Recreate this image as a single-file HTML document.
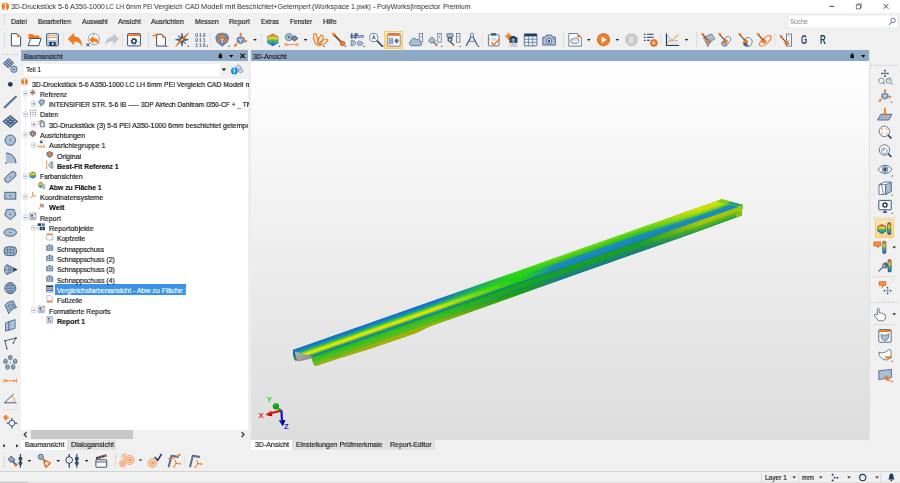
<!DOCTYPE html>
<html lang="de"><head><meta charset="utf-8"><title>PolyWorks|Inspector Premium</title>
<style>
html,body{margin:0;padding:0;background:#f0f0f0;}
body{width:900px;height:483px;overflow:hidden;position:relative;font-family:"Liberation Sans",sans-serif;}
#app{position:absolute;left:0;top:0;width:900px;height:483px;overflow:hidden;background:#f0f0f0;}
#app>div{position:absolute;}
#app>span,#ttl>span{position:absolute;white-space:pre;line-height:10px;height:10px;will-change:transform;transform-origin:0 50%;-webkit-text-stroke:0.18px currentColor;}
#app>svg{position:absolute;left:0;top:0;will-change:transform;}
</style></head>
<body><div id="app">
<div style="left:0px;top:0px;width:900px;height:13px;background:#fff;"></div>
<div style="left:787.8px;top:14.9px;width:110.6px;height:13.4px;background:#fff;border-radius:1.5px;box-shadow:inset 0 0 0 0.6px #e6e6e6;"></div>
<div style="left:21px;top:50.2px;width:227.4px;height:10.7px;background:#8ea9c5;"></div>
<div style="left:251.2px;top:50.2px;width:617.8px;height:10.7px;background:#8ea9c5;"></div>
<div style="left:21px;top:61px;width:227.3px;height:379px;background:#fff;"></div>
<div style="left:21px;top:60.9px;width:227.3px;height:17.7px;background:#f0f0f0;"></div>
<div style="left:24px;top:63.5px;width:196px;height:12.3px;background:#fff;"></div>
<div style="left:251.2px;top:60.9px;width:617.8px;height:379px;background:linear-gradient(180deg,#ffffff 0%,#f6f6f6 25%,#ececec 55%,#e3e3e3 80%,#dddddd 100%);"></div>
<div style="left:21px;top:430px;width:227.3px;height:10px;background:#f0f0f0;"></div>
<div style="left:31px;top:430px;width:102px;height:9px;background:#c8c8c8;"></div>
<div style="left:21px;top:439.8px;width:46px;height:9.8px;background:#fff;"></div>
<div style="left:67px;top:439.8px;width:49px;height:9.8px;background:#e1e1e1;"></div>
<div style="left:251px;top:439.8px;width:41px;height:9.8px;background:#fff;"></div>
<div style="left:292px;top:439.8px;width:143px;height:9.8px;background:#e1e1e1;"></div>
<div style="left:0px;top:471px;width:900px;height:1px;background:#d4d4d4;"></div>
<div style="left:55px;top:284.3px;width:131.3px;height:10.6px;background:#3a93e8;"></div>
<div style="left:384.4px;top:30.5px;width:18.6px;height:18.4px;background:linear-gradient(180deg,#fee6b8,#fcd48a);border-radius:1px;box-shadow:inset 0 0 0 1px #fdcb66;"></div>
<div style="left:875.2px;top:219.4px;width:18.8px;height:18.7px;background:linear-gradient(180deg,#fee6b8,#fcd48a);border-radius:1px;box-shadow:inset 0 0 0 1px #fdcb66;"></div>
<svg width="900" height="483" viewBox="0 0 900 483"><defs>
<linearGradient id="rb" x1="0" y1="0" x2="0" y2="1"><stop offset="0" stop-color="#e63a26"/><stop offset="0.22" stop-color="#f5a81c"/><stop offset="0.38" stop-color="#efe028"/><stop offset="0.55" stop-color="#4cc048"/><stop offset="0.75" stop-color="#1f9fd0"/><stop offset="1" stop-color="#3a4aa8"/></linearGradient>
</defs>
<line x1="4.5" y1="32.5" x2="4.5" y2="46" stroke="#b4b4b4" stroke-width="1" stroke-dasharray="1 1.45"/>
<line x1="148.5" y1="32.5" x2="148.5" y2="46" stroke="#b4b4b4" stroke-width="1" stroke-dasharray="1 1.45"/>
<line x1="563.5" y1="32.5" x2="563.5" y2="46" stroke="#b4b4b4" stroke-width="1" stroke-dasharray="1 1.45"/>
<line x1="696.8" y1="32.5" x2="696.8" y2="46" stroke="#b4b4b4" stroke-width="1" stroke-dasharray="1 1.45"/>
<line x1="4.5" y1="14.5" x2="4.5" y2="25" stroke="#b4b4b4" stroke-width="1" stroke-dasharray="1 1.45"/>
<line x1="63.3" y1="33" x2="63.3" y2="46.5" stroke="#e0e0e0" stroke-width="1"/>
<line x1="122.5" y1="33" x2="122.5" y2="46.5" stroke="#e0e0e0" stroke-width="1"/>
<line x1="210.6" y1="33" x2="210.6" y2="46.5" stroke="#e0e0e0" stroke-width="1"/>
<line x1="261.6" y1="33" x2="261.6" y2="46.5" stroke="#e0e0e0" stroke-width="1"/>
<line x1="482.2" y1="33" x2="482.2" y2="46.5" stroke="#e0e0e0" stroke-width="1"/>
<line x1="660.6" y1="33" x2="660.6" y2="46.5" stroke="#e0e0e0" stroke-width="1"/>
<line x1="774.7" y1="33" x2="774.7" y2="46.5" stroke="#e0e0e0" stroke-width="1"/>
<g transform="translate(16,39.7)"><path d="M-4.6,-6 H1.2 L4.6,-2.6 V6.2 H-4.6Z" fill="#fff" stroke="#1f3b5e" stroke-width="0.9" /><path d="M1.2,-6 L4.6,-2.6 H1.2Z" fill="#f47a1f" /></g>
<g transform="translate(34.5,39.7)"><path d="M-6,-5.8 h4.2 l1.3,1.6 h5.3 v3.4 h-10.8z" fill="#f47a1f" /><path d="M-6.3,6 L-3.8,-1.3 H6.6 L4.3,6Z" fill="#fff" stroke="#1f3b5e" stroke-width="0.9" /></g>
<g transform="translate(52.5,39.7)"><rect x="-6" y="-6" width="12" height="12.2" fill="#b4c6da" rx="1.2" stroke="#3a5678" stroke-width="0.9" /><rect x="-3.8" y="-5.3" width="7.6" height="5.6" fill="#fff" /><line x1="-3.8" y1="-3.9" x2="3.8" y2="-3.9" stroke="#f47a1f" stroke-width="0.8" /><line x1="-3.8" y1="-2.1" x2="3.8" y2="-2.1" stroke="#f47a1f" stroke-width="0.8" /><rect x="-3.2" y="2.2" width="6.4" height="4" fill="#1f3b5e" /><rect x="-0.6" y="3" width="1.6" height="2.2" fill="#fff" /></g>
<g transform="translate(75,39.7)"><path d="M-7,-0.6 L-1.2,-6.4 V-3.2 C3.6,-3.2 6.8,0.6 6.8,6 C5,2.8 2.6,1.6 -1.2,1.6 V5 Z" fill="#f47a1f" stroke="#c9621a" stroke-width="0.4" /></g>
<g transform="translate(93,39.7)"><circle cx="0.8" cy="-0.6" r="5.6" fill="#fff" stroke="#7d90a8" stroke-width="0.8"/><line x1="0.8" y1="-5.4" x2="0.8" y2="-4.2" stroke="#1f3b5e" stroke-width="0.6" /><line x1="5.4" y1="-0.6" x2="4.4" y2="-0.6" stroke="#1f3b5e" stroke-width="0.6" /><g transform="translate(1.2,0.6) scale(0.72)"><path d="M-7,-0.6 L-1.2,-6.4 V-3.2 C3.6,-3.2 6.8,0.6 6.8,6 C5,2.8 2.6,1.6 -1.2,1.6 V5 Z" fill="#f47a1f" /></g><path d="M-6.6,3.6 l3,3 M-3.6,3.6 l-3,3" fill="none" stroke="#1f3b5e" stroke-width="1.0" /></g>
<g transform="translate(112,39.7)"><g transform="scale(-1,1)"><path d="M-7,-0.6 L-1.2,-6.4 V-3.2 C3.6,-3.2 6.8,0.6 6.8,6 C5,2.8 2.6,1.6 -1.2,1.6 V5 Z" fill="#c6c6c6" /></g></g>
<g transform="translate(134,39.7)"><rect x="-6.4" y="-6" width="12.8" height="12.2" fill="#fff" rx="0.8" stroke="#1f3b5e" stroke-width="0.9" /><rect x="-6" y="-5.6" width="12" height="2" fill="#f47a1f" /><circle cx="0" cy="1.5" r="2.0" fill="none" stroke="#1f3b5e" stroke-width="1.3"/><circle cx="0" cy="1.5" r="2.9" fill="none" stroke="#1f3b5e" stroke-width="1.1" stroke-dasharray="1.14 1.14"/></g>
<g transform="translate(160,39.7)"><path d="M-3.4,-5.4 H2 L5.4,-2 V6.4 H-3.4Z" fill="#fff" stroke="#1f3b5e" stroke-width="0.9" /><path d="M2,-5.4 L5.4,-2 H2Z" fill="#f47a1f" /><path d="M-7.4,-5 h3 v-1.4 l2.8,2.2 l-2.8,2.2 v-1.4 h-3z" fill="#f47a1f" /><path d="M7.2,5.6 V7.2 H5.6Z" fill="#2a3f5a" /></g>
<g transform="translate(182,39.7)"><path d="M0,-6.6 L1.3,-1.3 L6.6,0 L1.3,1.3 L0,6.6 L-1.3,1.3 L-6.6,0 L-1.3,-1.3Z" fill="#4a6485" stroke="#1f3b5e" stroke-width="0.5" /><path d="M-4,-4 L0,-1 M4,4 L0,1 M-4,4 L0,1 M4,-4 L0,-1" fill="none" stroke="#1f3b5e" stroke-width="0.9" /><path d="M-6.4,6.6 L-1,-0.8 L6.6,-6.8 L1,0.8Z" fill="#f47a1f" stroke="#8a4a20" stroke-width="0.4" /><circle cx="0" cy="0" r="0.8" fill="#fff"/><path d="M7,5.4 V7 H5.4Z" fill="#2a3f5a" /></g>
<g font-family="Liberation Mono, monospace" font-weight="700" font-size="5.5" fill="#62779a" text-anchor="middle" style="letter-spacing:0.45px"><text x="200.6" y="37.2">010</text><text x="200.6" y="42">011</text><text x="200.6" y="46.5">110</text></g>
<g transform="translate(201,39.7)"><path d="M7,5.4 V7 H5.4Z" fill="#2a3f5a" /></g>
<g transform="translate(222.2,39.5)"><path d="M0,-6.4 L4.4,-5.6 L6.6,-2.4 L5.4,2.4 L0,6.8 L-5.4,2.4 L-6.6,-2.4 L-4.4,-5.6Z" fill="#6a86aa" stroke="#4a6890" stroke-width="0.6" stroke-linejoin="round"/><path d="M-3.6,-3.4 L0,-4.8 L3.6,-3.4 L1.8,-0.8 H-1.8Z" fill="#f47a1f" /><path d="M-5,-1.8 L-2.6,0.2 L-1.2,4 L-4.2,1.6Z" fill="#f47a1f" /><path d="M5,-1.8 L2.6,0.2 L1.2,4 L4.2,1.6Z" fill="#f47a1f" /><path d="M-1.6,-0.4 L0,0.6 L1.6,-0.4 M0,0.6 V3.6" fill="none" stroke="#e8eef5" stroke-width="1.0" /><path d="M7.4,5.800000000000001 V7.4 H5.800000000000001Z" fill="#2a3f5a" /></g>
<g transform="translate(240.6,39.7)"><path d="M-3.4,-1.6 L0,-3.2 L3.6,-1.6 V2.2 L0,4 L-3.4,2.2Z" fill="#7f98b8" stroke="#3f5a7e" stroke-width="0.7" /><path d="M-2,-0.6 L0,0.4 L2.2,-0.6 M0,0.4 V2.8" fill="none" stroke="#eef2f7" stroke-width="0.8" /><path d="M0.2,-7.4 L1.6,-5 L0.2,-3.2 L-1.2,-5Z" fill="#f47a1f" /><path d="M7.2,1.4 L5,0 L3.4,1.4 L5,2.8Z" fill="#f47a1f" /><path d="M-6.6,7.2 L-6,4.4 L-3.2,3.2 L-4,6.2Z" fill="#f47a1f" /></g>
<path d="M253.2,38.9 h3.6 l-1.8,2z" fill="#1a1a1a" />
<g transform="translate(272.8,39.9)"><path d="M0,-6 L5.4,-3.2 V3 L0,6 L-5.4,3 V-3.2Z" fill="url(#rb)" stroke="#3a4a78" stroke-width="0.4" /><path d="M-5.4,-3.2 L0,-0.6 L5.4,-3.2 M0,-0.6 V6" fill="none" stroke="#1a2a50" stroke-width="0.5" opacity="0.3"/><path d="M7.2,5.6 V7.2 H5.6Z" fill="#2a3f5a" /></g>
<g transform="translate(291.5,39.7)"><circle cx="-2.6" cy="-2.6" r="3.6" fill="#a9bfd6" stroke="#5d7798" stroke-width="0.8"/><circle cx="-2.6" cy="-2.6" r="1.3" fill="#5d7798"/><path d="M3,-4.2 L6.6,-1.4 L3,1.6 L-0.4,-1.4Z" fill="#5d7798" stroke="#1f3b5e" stroke-width="0.5" /><circle cx="3" cy="-1.4" r="0.9" fill="#a9bfd6"/><path d="M-6.2,3.2 v3.4 M6.4,3.2 v3.4 M-5.4,4.9 H5.6" fill="none" stroke="#f47a1f" stroke-width="0.8" /><path d="M-6,4.9 l2,-1.2 v2.4z M6.2,4.9 l-2,-1.2 v2.4z" fill="#f47a1f" /></g>
<path d="M303.8,38.9 h3.6 l-1.8,2z" fill="#1a1a1a" />
<g transform="translate(320,39.7)"><ellipse cx="0" cy="0" rx="1.9" ry="5.6" fill="none" stroke="#f47a1f" stroke-width="1.2" transform="translate(-4.2,-0.6) rotate(-12)"/><ellipse cx="0" cy="0" rx="2.0" ry="5.4" fill="none" stroke="#f47a1f" stroke-width="1.2" transform="translate(0.4,0.6) rotate(22)"/><ellipse cx="0" cy="0" rx="1.9" ry="4.6" fill="none" stroke="#f47a1f" stroke-width="1.2" transform="translate(3.4,2.4) rotate(58)"/><path d="M4.6,5.6 V7.2 H2.9999999999999996Z" fill="#2a3f5a" /></g>
<g transform="translate(339,39.7)"><line x1="-5.2" y1="-5.2" x2="3.4" y2="3.6" stroke="#8a4a26" stroke-width="1.8" /><path d="M-7.2,-7.2 L-2.8,-5.8 L-5.8,-2.8Z" fill="#f47a1f" /><circle cx="3.6" cy="3.8" r="2.3" fill="#f47a1f" stroke="#8a4a20" stroke-width="0.6"/><path d="M7,5.6 V7.2 H5.4Z" fill="#2a3f5a" /></g>
<g transform="translate(357.5,39.7)"><rect x="-6.6" y="-4.4" width="12.4" height="2" fill="#a9bfd6" stroke="#4a6485" stroke-width="0.6" /><path d="M-6.6,-6.4 h1.6 v5.4 h-1.6z M-3,-6.4 h3.4 v2 h-1.6 v3.4 h-1.8z" fill="#4a6485" /><path d="M-6.4,0.6 C-3.4,0.8 -1.8,2 -1.8,3.4 C-1.8,4.8 -3.4,6 -6.4,6.2Z" fill="#a9bfd6" stroke="#4a6485" stroke-width="0.6" /><path d="M1,1.4 C3,1.4 4.6,2.2 5.8,3.8 C4.6,5.2 3,5.8 1,5.8 C-0.4,5.8 -0.4,1.4 1,1.4Z" fill="#a9bfd6" stroke="#4a6485" stroke-width="0.6" /><path d="M7.2,5.6 V7.2 H5.6Z" fill="#2a3f5a" /></g>
<g transform="translate(376,39.7)"><circle cx="-2.2" cy="-2.2" r="4.1" fill="#fff" stroke="#4a6485" stroke-width="0.8"/><path d="M-3.8,-0.4 L-2.2,-4.4 L-0.6,-0.4 M-3.2,-1.7 H-1.2" fill="none" stroke="#1f3b5e" stroke-width="0.7" /><line x1="0.8" y1="0.8" x2="6.6" y2="6.8" stroke="#1f3b5e" stroke-width="1.6" /><path d="M7.4,5.800000000000001 V7.4 H5.800000000000001Z" fill="#2a3f5a" /></g>
<g transform="translate(394,39.7)"><rect x="-6.2" y="-6.2" width="12.4" height="12.6" fill="#fff" rx="0.8" stroke="#5a7090" stroke-width="0.8" /><rect x="-5.8" y="-5.8" width="11.6" height="2" fill="#f47a1f" /><rect x="-4.4" y="-1.6" width="3.4" height="2.4" fill="#a9bfd6" stroke="#5a7090" stroke-width="0.5" /><rect x="-4.4" y="1.8" width="3.4" height="2.4" fill="#a9bfd6" stroke="#5a7090" stroke-width="0.5" /><path d="M2.6,-1.6 L5,1.2 L2.6,4 L0.2,1.2Z" fill="#5a7090" /></g>
<g transform="translate(416,39.7)"><rect x="3.2" y="-6.2" width="3.4" height="8.4" fill="#fff" stroke="#5a7090" stroke-width="0.8" /><line x1="4.9" y1="-4.4" x2="4.9" y2="-1.4" stroke="#5a7090" stroke-width="0.6" /><path d="M-4.2,6 C-7.2,6 -7.4,2 -4.8,1.4 C-4.8,-1.6 -0.6,-2.4 0.6,0.2 C3,-0.8 5.2,1 4.4,3 C6.6,3.4 6,6 4,6Z" fill="#a9bfd6" stroke="#4a6485" stroke-width="0.8" /></g>
<g transform="translate(435,39.7)"><rect x="2.8" y="-6.2" width="3.4" height="8.6" fill="#fff" stroke="#5a7090" stroke-width="0.8" /><line x1="4.5" y1="-4.4" x2="4.5" y2="-1.2" stroke="#5a7090" stroke-width="0.6" /><path d="M-6.6,0.8 L-3.2,-2.8 L0.6,1 L-1.2,3 L-4.2,3.2Z" fill="#a9bfd6" stroke="#4a6485" stroke-width="0.8" /><line x1="-1" y1="2.6" x2="0.8" y2="4.6" stroke="#4a6485" stroke-width="1.2" /><circle cx="1.4" cy="5.2" r="1.3" fill="#f47a1f"/><path d="M7.2,5.800000000000001 V7.4 H5.6Z" fill="#2a3f5a" /></g>
<g transform="translate(453.5,39.7)"><rect x="3" y="-6.2" width="3.4" height="8.6" fill="#fff" stroke="#5a7090" stroke-width="0.8" /><line x1="4.7" y1="-4.4" x2="4.7" y2="-1.2" stroke="#5a7090" stroke-width="0.6" /><rect x="-6.6" y="-6" width="6.2" height="3.4" fill="#a9bfd6" rx="0.6" stroke="#4a6485" stroke-width="0.8" /><path d="M-6,-2.4 H-1.2 V0.6 L-2.6,2.6 H-4.6 L-6,0.6Z" fill="#4a6485" /><circle cx="-3.6" cy="0" r="1" fill="#fff"/><line x1="-2.8" y1="2.4" x2="-0.4" y2="4.8" stroke="#1f3b5e" stroke-width="1.1" /><circle cx="0" cy="5.2" r="1.2" fill="#f47a1f"/><path d="M7.2,5.800000000000001 V7.4 H5.6Z" fill="#2a3f5a" /></g>
<g transform="translate(472,39.7)"><circle cx="0" cy="-4.6" r="1.7" fill="#fff" stroke="#4a6485" stroke-width="0.8"/><path d="M-0.8,-3.2 L-5.8,6.2 M0.8,-3.2 L5.6,6" fill="none" stroke="#4a6485" stroke-width="1.3" /><line x1="-3.2" y1="1.6" x2="3.2" y2="1.6" stroke="#4a6485" stroke-width="0.8" /><line x1="0" y1="-7" x2="0" y2="-6" stroke="#4a6485" stroke-width="0.9" /><path d="M7.2,5.6 V7.2 H5.6Z" fill="#2a3f5a" /></g>
<g transform="translate(494,39.7)"><rect x="-5.6" y="-5" width="10.6" height="11.2" fill="#fff" rx="0.8" stroke="#4a6485" stroke-width="0.9" /><rect x="-2.8" y="-6.6" width="5" height="2.6" fill="#4a6485" rx="0.5" /><rect x="-3" y="-2" width="5.6" height="3" fill="#d5dce6" /><line x1="-4.4" y1="-1.8" x2="-4.4" y2="1" stroke="#f47a1f" stroke-width="0.6" /><path d="M-2.6,2.6 L-0.2,5.2 L5.6,-0.6" fill="none" stroke="#f47a1f" stroke-width="1.5" /></g>
<g transform="translate(512,39.7)"><path d="M-3.4,-6.6 v6.6 M-6.7,-3.3 h6.6" fill="none" stroke="#f47a1f" stroke-width="2.1" /><path d="M-2.6,-2.4 h1.6 l0.8,-1.2 h3 l0.8,1.2 h1.8 v5.4 h-8z" fill="#1f3b5e" /><circle cx="1.2" cy="0.4" r="1.7" fill="#fff"/><circle cx="1.2" cy="0.4" r="0.9" fill="#1f3b5e"/><path d="M-0.8,4.6 H5.2 M-0.8,6.4 H5.2" fill="none" stroke="#8a98ab" stroke-width="0.7" /><path d="M-2.6,4.6 h1 M-2.6,6.4 h1" fill="none" stroke="#f47a1f" stroke-width="0.9" /></g>
<g transform="translate(530.5,39.7)"><rect x="-6.2" y="-5.8" width="12.6" height="12" fill="#eef2f7" rx="0.6" stroke="#3a5678" stroke-width="0.8" /><rect x="-6.2" y="-5.8" width="12.6" height="2.5" fill="#1f3b5e" /><path d="M-6.2,-0.4 h12.6 M-6.2,2.7 h12.6 M-2,-3.2 v9.4 M2.2,-3.2 v9.4" fill="none" stroke="#6f86a6" stroke-width="0.9" /></g>
<g transform="translate(549,39.7)"><path d="M-6.2,-2.6 h2.6 l1.2,-2 h4.8 l1.2,2 h2.8 v8 h-12.6z" fill="#a9bfd6" stroke="#4a6485" stroke-width="0.9" /><circle cx="0" cy="1.4" r="2.7" fill="#dfe6ef" stroke="#4a6485" stroke-width="0.8"/><circle cx="0" cy="1.4" r="1.2" fill="#1f3b5e"/><circle cx="4.6" cy="-0.8" r="0.5" fill="#1f3b5e"/></g>
<g transform="translate(575,39.7)"><path d="M-6.2,-6.2 H2.4 L6.4,-2.2 V6.4 H-6.2Z" fill="#fff" stroke="#4a6485" stroke-width="0.8" /><path d="M2.4,-6.2 L6.4,-2.2 H2.4Z" fill="#f47a1f" /><path d="M-4.4,0.8 C-4.4,-1 -2,-1.4 -1.4,-0.4 C-0.6,-2.6 2.4,-2.4 2.6,-0.4 C4.2,-0.4 4.6,1.6 3.4,2.2 C3,4.2 0.8,4.4 -0.2,3.4 C-1.6,4.4 -4,3.6 -3.4,2.2 C-4.4,2.2 -4.8,1.4 -4.4,0.8Z" fill="#dfe6ef" stroke="#4a6485" stroke-width="0.7" /></g>
<path d="M587.0,38.9 h3.6 l-1.8,2z" fill="#1a1a1a" />
<g transform="translate(603.5,39.7)"><circle cx="0" cy="0" r="6.2" fill="#f47a1f" stroke="#9a5a2a" stroke-width="0.6"/><path d="M-1.9,-3.2 L3.4,0 L-1.9,3.2Z" fill="#fff" /></g>
<path d="M615.6,38.9 h3.6 l-1.8,2z" fill="#1a1a1a" />
<g transform="translate(631.5,39.7)"><path d="M-2.6,-6.2 H2.6 L6.2,-2.6 V2.6 L2.6,6.2 H-2.6 L-6.2,2.6 V-2.6Z" fill="#c8c8c8" /><path d="M-2.4,-0.6 V-3 h1 v-0.8 h1.2 v0.4 h1.2 v0.8 h1 V1.6 L1.4,3.6 H-1.2 L-3.2,0.8Z" fill="#dedede" /></g>
<g transform="translate(650.5,39.7)"><path d="M-6.6,-5.4 h1.6 M-6.6,-2.4 h1.6 M-6.6,0.6 h1.6" fill="none" stroke="#1f3b5e" stroke-width="1.3" /><path d="M-3.6,-5.4 H3 M-3.6,-2.4 H3 M-3.6,0.6 H-0.6" fill="none" stroke="#1f3b5e" stroke-width="1.1" /><circle cx="3.4" cy="3.2" r="3.5" fill="#f47a1f" stroke="#9a5a2a" stroke-width="0.5"/><path d="M2.3,1.5 L5.2,3.2 L2.3,4.9Z" fill="#fff" /></g>
<g transform="translate(672.5,39.7)"><path d="M-6,-6.2 V5.8 H6.6" fill="none" stroke="#1f3b5e" stroke-width="1.2" /><path d="M-4.6,-4 L-2,-0.6 L1,1.4 L5.6,0.8" fill="none" stroke="#7d93ae" stroke-width="0.7" /><path d="M-4.8,2.6 L-2.6,0.6 L-0.6,1.6 L2.6,-2.6 L6,-4.6" fill="none" stroke="#f47a1f" stroke-width="0.9" /><path d="M-4,4.4 h9.6" fill="none" stroke="#7d93ae" stroke-width="0.7" stroke-dasharray="0.8 0.8"/></g>
<path d="M684.7,38.9 h3.6 l-1.8,2z" fill="#1a1a1a" />
<g transform="translate(708,39.7)"><path d="M-4.6,-1.8 C-1.6,-4 2.6,-5.4 4,-5.6 C5,-3 6.4,-1.8 7.2,-1 C3.6,0.6 1.4,3.2 -0.2,7 C-1.6,3.6 -3,0.6 -4.6,-1.8Z" fill="#a9bfd6" stroke="#4a6485" stroke-width="0.7" /><line x1="-5.6" y1="-5.6" x2="0.3" y2="1.2" stroke="#7a3a1c" stroke-width="1.1" /><path d="M-6.8,-7 L-3.2,-6 L-5.8,-3.4Z" fill="#f47a1f" /><circle cx="0.6" cy="1.6" r="1.9" fill="#f47a1f" stroke="#b85a18" stroke-width="0.5"/></g>
<g transform="translate(725,39.7)"><path d="M-3,3 L1.2,-2.6 C3.2,-4.4 6.6,-2.2 5.6,0.4 L1.6,5.6 C0.2,7.4 -4,5.6 -3,3Z" fill="#fff" stroke="#4a6485" stroke-width="0.8" /><path d="M-3,3 C-1,2 1.6,3.4 1.6,5.6 C0.2,7.4 -4,5.6 -3,3Z" fill="#a9bfd6" stroke="#4a6485" stroke-width="0.7" /><line x1="-5.6" y1="-5.6" x2="0.3" y2="1.2" stroke="#7a3a1c" stroke-width="1.1" /><path d="M-6.8,-7 L-3.2,-6 L-5.8,-3.4Z" fill="#f47a1f" /><circle cx="0.6" cy="1.6" r="1.9" fill="#f47a1f" stroke="#b85a18" stroke-width="0.5"/></g>
<g transform="translate(745,39.7)"><path d="M0.4,-1.6 C3.6,-3.6 7.6,-0.8 7.2,2.8 L5,6.4 H2.4 L1.8,4.8 L-1.4,4.4Z" fill="#fff" stroke="#4a6485" stroke-width="0.8" /><path d="M-1.6,2.6 H2.6 V5.6 L4.4,6.8 H0.4 L-1.6,5.2Z" fill="#4a6485" /><line x1="-5.6" y1="-5.6" x2="0.3" y2="1.2" stroke="#7a3a1c" stroke-width="1.1" /><path d="M-6.8,-7 L-3.2,-6 L-5.8,-3.4Z" fill="#f47a1f" /><circle cx="0.6" cy="1.6" r="1.9" fill="#f47a1f" stroke="#b85a18" stroke-width="0.5"/></g>
<g transform="translate(763.5,39.7)"><ellipse cx="0" cy="0" rx="7.2" ry="2.9" fill="none" stroke="#f47a1f" stroke-width="1.1" transform="translate(1.8,1.2) rotate(-42)"/><line x1="-5.6" y1="-5.6" x2="0.3" y2="1.2" stroke="#7a3a1c" stroke-width="1.1" /><path d="M-6.8,-7 L-3.2,-6 L-5.8,-3.4Z" fill="#f47a1f" /><circle cx="0.6" cy="1.6" r="1.9" fill="#f47a1f" stroke="#b85a18" stroke-width="0.5"/></g>
<g transform="translate(785,39.7)"><rect x="1.6" y="-5.6" width="4.8" height="12" fill="#fff" stroke="#4a6485" stroke-width="0.8" /><line x1="3" y1="-3.4" x2="4.6" y2="-3.4" stroke="#1f3b5e" stroke-width="0.5" /><line x1="3" y1="0.6" x2="4.6" y2="0.6" stroke="#1f3b5e" stroke-width="0.5" /><line x1="3" y1="3.6" x2="4.6" y2="3.6" stroke="#1f3b5e" stroke-width="0.5" /><g transform="translate(1.2,2)"><line x1="-5.6" y1="-5.6" x2="0.3" y2="1.2" stroke="#7a3a1c" stroke-width="1.1" /><path d="M-6.8,-7 L-3.2,-6 L-5.8,-3.4Z" fill="#f47a1f" /><circle cx="0.6" cy="1.6" r="1.9" fill="#f47a1f" stroke="#b85a18" stroke-width="0.5"/></g></g>
<line x1="2" y1="54.4" x2="18" y2="54.4" stroke="#b4b4b4" stroke-width="1" stroke-dasharray="1 1.45"/>
<g transform="translate(10.3,66)"><path d="M-7,-2.6 L-1.6,-7.4 L3.4,-3 L-2,1.8Z" fill="#a9bfd6" stroke="#405b80" stroke-width="1.0" /><path d="M-5.3,-4.2 L0,0.3 M-3.5,-5.7 L1.7,-1.3 M-5.2,-1 L0,-5.8 M-3.5,0.5 L1.8,-4.4" fill="none" stroke="#405b80" stroke-width="0.9" /><circle cx="3.6" cy="3.2" r="3.2" fill="#a9bfd6" stroke="#405b80" stroke-width="0.8"/><circle cx="3.6" cy="3.2" r="0.7" fill="#1f3b5e"/></g>
<circle cx="10.3" cy="84.3" r="2.4" fill="#1f3b5e"/>
<line x1="4.8" y1="107.2" x2="15.8" y2="96.8" stroke="#58729a" stroke-width="2.2" stroke-linecap="round"/>
<g transform="translate(10.3,121.5)"><path d="M-7,0 L0,-5.8 L7,0 L0,5.8Z" fill="#a9bfd6" stroke="#405b80" stroke-width="1.2" /><path d="M-4.6,-2 L2.4,3.8 M-2.4,-3.8 L4.6,2 M-4.6,2 L2.4,-3.8 M-2.4,3.8 L4.6,-2" fill="none" stroke="#405b80" stroke-width="1.2" /></g>
<g transform="translate(10.3,140.2)"><circle cx="0" cy="0" r="5.2" fill="#a9bfd6" stroke="#405b80" stroke-width="0.9"/><circle cx="0" cy="0" r="0.6" fill="#1f3b5e"/></g>
<g transform="translate(10.3,158.5)"><path d="M-4.4,-5.4 C1.4,-5.4 5.6,-1.2 5.6,4.8 H-4.4Z" fill="#a9bfd6" /><path d="M-4.4,-5.4 C1.4,-5.4 5.6,-1.2 5.6,4.8" fill="none" stroke="#405b80" stroke-width="1.0" /><circle cx="-4.4" cy="4.8" r="0.7" fill="#1f3b5e"/></g>
<g transform="translate(10.3,177)"><rect x="-6.6" y="-3" width="13.2" height="6" fill="#a9bfd6" rx="3" stroke="#405b80" stroke-width="0.9" transform="rotate(-42)"/><circle cx="0" cy="0" r="0.6" fill="#1f3b5e"/></g>
<g transform="translate(10.3,195.7)"><rect x="-5.5" y="-3.4" width="11" height="6.8" fill="#a9bfd6" stroke="#405b80" stroke-width="0.9" /><circle cx="0" cy="0" r="0.6" fill="#1f3b5e"/></g>
<g transform="translate(10.3,214.4)"><path d="M-3.6,-5 H3.6 L5.6,0.6 L0,5.2 L-5.6,0.6Z" fill="#a9bfd6" stroke="#405b80" stroke-width="0.9" /><circle cx="0" cy="0" r="0.6" fill="#1f3b5e"/></g>
<g transform="translate(10.3,232.5)"><ellipse cx="0" cy="0" rx="6.3" ry="3.8" fill="#a9bfd6" stroke="#405b80" stroke-width="0.9" /><circle cx="0" cy="0" r="0.6" fill="#1f3b5e"/></g>
<g transform="translate(10.3,251.2)"><rect x="-6.2" y="-4.4" width="12.4" height="8.8" fill="#a9bfd6" rx="3.6" stroke="#405b80" stroke-width="0.9" /><path d="M2.4,-4.4 C4.4,-2 4.4,2 2.4,4.4 M-0.8,-4.4 C1,-2 1,2 -0.8,4.4 M-3.8,-4.2 C-2.2,-2 -2.2,2 -3.8,4.2 M-6,-1.4 H4 M-6,1.4 H4" fill="none" stroke="#405b80" stroke-width="0.6" /></g>
<g transform="translate(10.3,269.6)"><path d="M-3.4,-4.8 L6.8,0 L-3.4,4.8 C-6.6,3.6 -6.6,-3.6 -3.4,-4.8Z" fill="#a9bfd6" stroke="#405b80" stroke-width="0.9" /><path d="M-3.4,-4.8 C-1.2,-2.4 -1.2,2.4 -3.4,4.8 M-6,0 H6.8 M-0.6,-3.4 C0.8,-1.6 0.8,1.6 -0.6,3.4" fill="none" stroke="#405b80" stroke-width="0.6" /><path d="M3,-1.8 L6.8,0 L3,1.8Z" fill="#1f3b5e" /></g>
<g transform="translate(10.3,288.2)"><circle cx="0" cy="0" r="5.5" fill="#a9bfd6" stroke="#405b80" stroke-width="0.9"/><path d="M-5.5,0 H5.5 M0,-5.5 V5.5 M-4.6,-2.8 H4.6 M-4.6,2.8 H4.6" fill="none" stroke="#405b80" stroke-width="0.6" /><ellipse cx="0" cy="0" rx="2.6" ry="5.5" fill="none" stroke="#405b80" stroke-width="0.6" /></g>
<g transform="translate(10.3,307)"><path d="M-5.4,-1.6 C-2.4,-5.4 1.6,-6.4 3.2,-5.8 C4.2,-2.6 5.4,-0.6 6.4,0.4 C2.6,1.4 0.4,3.6 -1.6,6.8 C-2.6,3.6 -4,0.6 -5.4,-1.6Z" fill="#a9bfd6" stroke="#405b80" stroke-width="0.9" /><path d="M-2.6,-4.4 C-1.4,-1.6 0,1.6 1,3.2 M0.4,-5.6 C1.4,-2.8 2.8,-0.4 4,1.2 M-4.4,1 C-1.6,-1.4 1.6,-2.8 4.4,-3 M-3,3.8 C-0.4,1.2 2.6,-0.6 5.4,-1" fill="none" stroke="#405b80" stroke-width="0.6" /></g>
<g transform="translate(10.3,325.6)"><path d="M-4.8,-2.6 L0.6,-4.6 V3.6 L-4.8,5.6Z" fill="#a9bfd6" stroke="#405b80" stroke-width="0.8" /><path d="M-1.6,-3.8 L4.8,-6 V2.6 L-1.6,4.8Z" fill="#a9bfd6" stroke="#405b80" stroke-width="0.8" fill-opacity="0.85"/></g>
<g transform="translate(10.3,343.6)"><path d="M-3.4,5.2 L-5.4,-2.8 L5.8,-5.6 L3,-0.6" fill="none" stroke="#1f3b5e" stroke-width="0.8" /><circle cx="-3.4" cy="5.2" r="0.8" fill="#1f3b5e"/><circle cx="-5.4" cy="-2.8" r="0.8" fill="#1f3b5e"/><circle cx="5.8" cy="-5.6" r="0.8" fill="#1f3b5e"/><circle cx="3" cy="-0.6" r="0.8" fill="#1f3b5e"/></g>
<g transform="translate(10.3,362.4)"><rect x="-1.7" y="-7.0" width="3.4" height="4.4" fill="#a9bfd6" rx="1.6" stroke="#405b80" stroke-width="0.8" /><line x1="-1.6" y1="-4.8" x2="1.6" y2="-4.8" stroke="#405b80" stroke-width="0.6" /><rect x="-6.5" y="-3.2" width="3.4" height="4.4" fill="#a9bfd6" rx="1.6" stroke="#405b80" stroke-width="0.8" /><line x1="-6.4" y1="-1" x2="-3.1999999999999997" y2="-1" stroke="#405b80" stroke-width="0.6" /><rect x="3.0999999999999996" y="-3.2" width="3.4" height="4.4" fill="#a9bfd6" rx="1.6" stroke="#405b80" stroke-width="0.8" /><line x1="3.1999999999999997" y1="-1" x2="6.4" y2="-1" stroke="#405b80" stroke-width="0.6" /><rect x="-4.5" y="2.3999999999999995" width="3.4" height="4.4" fill="#a9bfd6" rx="1.6" stroke="#405b80" stroke-width="0.8" /><line x1="-4.4" y1="4.6" x2="-1.1999999999999997" y2="4.6" stroke="#405b80" stroke-width="0.6" /><rect x="1.0999999999999999" y="2.3999999999999995" width="3.4" height="4.4" fill="#a9bfd6" rx="1.6" stroke="#405b80" stroke-width="0.8" /><line x1="1.1999999999999997" y1="4.6" x2="4.4" y2="4.6" stroke="#405b80" stroke-width="0.6" /><circle cx="0" cy="0.4" r="0.6" fill="#1f3b5e"/></g>
<g transform="translate(10.3,380.7)"><path d="M-6.2,-2 V2 M6.2,-2 V2 M-5,0 H5" fill="none" stroke="#f47a1f" stroke-width="0.8" /><path d="M-5.8,0 L-3.2,-1.5 V1.5Z M5.8,0 L3.2,-1.5 V1.5Z" fill="#f47a1f" /></g>
<g transform="translate(10.3,398.6)"><path d="M3.4,-4.6 L-6,4.2 H6.2" fill="none" stroke="#405b80" stroke-width="1.0" /><path d="M1.4,-2.8 C3.2,-1.4 4.4,1.2 4.4,4" fill="none" stroke="#f47a1f" stroke-width="0.8" /></g>
<line x1="3.4" y1="409.7" x2="17.4" y2="409.7" stroke="#dcdcdc" stroke-width="1"/>
<g transform="translate(10.3,421.5)"><circle cx="1.6" cy="1.6" r="2.9" fill="#fff" stroke="#405b80" stroke-width="1.0"/><path d="M1.6,-3.6 V-1.2 M1.6,4.4 V7 M-3.6,1.6 H-1.2 M4.4,1.6 H7" fill="none" stroke="#405b80" stroke-width="1.2" /><path d="M-4.4,-6.6 v5.4 M-7.1,-3.9 h5.4" fill="none" stroke="#f47a1f" stroke-width="2.0" /></g>
<line x1="871" y1="65.3" x2="896.5" y2="65.3" stroke="#b4b4b4" stroke-width="1" stroke-dasharray="1 1.45"/>
<line x1="871" y1="302.3" x2="896.5" y2="302.3" stroke="#b4b4b4" stroke-width="1" stroke-dasharray="1 1.45"/>
<line x1="873" y1="217.7" x2="896" y2="217.7" stroke="#dcdcdc" stroke-width="1"/>
<line x1="873" y1="276.6" x2="896" y2="276.6" stroke="#dcdcdc" stroke-width="1"/>
<line x1="873" y1="324.7" x2="896" y2="324.7" stroke="#dcdcdc" stroke-width="1"/>
<g transform="translate(885,77.5)"><path d="M0,-7.4 V-0.8 M-3.4,-4.1 H3.4" fill="none" stroke="#1f3b5e" stroke-width="0.6" /><path d="M0,-8 l1.2,1.5 h-2.4z M0,-0.2 l1.2,-1.5 h-2.4z M-4,-4.1 l1.5,-1.2 v2.4z M4,-4.1 l-1.5,-1.2 v2.4z" fill="#1f3b5e" /><circle cx="-3.6" cy="3.2" r="2.6" fill="#fff" stroke="#405b80" stroke-width="0.7"/><line x1="-1.8" y1="5" x2="-0.2" y2="6.8" stroke="#405b80" stroke-width="1.0" /><circle cx="3.8" cy="3.2" r="2.6" fill="none" stroke="#405b80" stroke-width="0.7"/><path d="M2.8,1.6 L3.8,3 L5,2" fill="none" stroke="#405b80" stroke-width="0.6" /><path d="M7.6,5.4 V7 H6.0Z" fill="#2a3f5a" /></g>
<g transform="translate(884.8,95.6)"><path d="M-3,-1.4 L0,-2.8 L3.2,-1.4 V2 L0,3.6 L-3,2Z" fill="#8fa7c4" stroke="#3f5a7e" stroke-width="0.7" /><path d="M-1.8,-0.6 L0,0.4 L2,-0.6 M0,0.4 V2.6" fill="none" stroke="#eef2f7" stroke-width="0.7" /><path d="M0.2,-7 L1.6,-4.6 L0.2,-2.8 L-1.2,-4.6Z" fill="#f47a1f" /><path d="M6.8,1.2 L4.6,-0.2 L3,1.2 L4.6,2.6Z" fill="#f47a1f" /><path d="M-6.2,6.4 L-5.6,3.8 L-2.8,2.8 L-3.6,5.6Z" fill="#f47a1f" /><path d="M7.4,5.6 V7.2 H5.800000000000001Z" fill="#2a3f5a" /></g>
<g transform="translate(885,114)"><path d="M-4.2,0.4 H6.8 L3.8,6 H-7.4Z" fill="#a9bfd6" stroke="#405b80" stroke-width="0.9" /><path d="M-5.6,3.2 H5.2 M-1.6,0.4 L-3.4,6 M2.6,0.4 L0.8,6" fill="none" stroke="#7f98b8" stroke-width="0.5" /><line x1="0" y1="-6.2" x2="0" y2="0" stroke="#f47a1f" stroke-width="1.7" /><path d="M-2.4,-0.8 H2.4 L0,2.8Z" fill="#f47a1f" /></g>
<g transform="translate(885,132.4)"><circle cx="-0.6" cy="-1" r="5.2" fill="#fff" stroke="#405b80" stroke-width="0.8"/><line x1="3.2" y1="2.8" x2="6.4" y2="6" stroke="#1f3b5e" stroke-width="1.6" /><path d="M-3.2,-2.2 V-3.6 H-1.8 M0.6,-3.6 H2 V-2.2 M2,0.2 V1.6 H0.6 M-1.8,1.6 H-3.2 V0.2" fill="none" stroke="#f47a1f" stroke-width="0.8" /></g>
<g transform="translate(885,151)"><circle cx="-0.6" cy="-1" r="5.2" fill="#fff" stroke="#405b80" stroke-width="0.8"/><line x1="3.2" y1="2.8" x2="6.4" y2="6" stroke="#1f3b5e" stroke-width="1.6" /><path d="M-3.6,-0.4 C-2.6,-3.4 0.4,-3.8 1.6,-1.4 C2.6,0.2 2,2.2 0.2,3 C-1.6,3.2 -3,1.8 -3.6,-0.4Z M-1.6,-2.8 V0.2" fill="none" stroke="#405b80" stroke-width="0.7" /></g>
<g transform="translate(885,169.4)"><path d="M-6.8,0 C-3.6,-5.4 3.6,-5.4 6.8,0 C3.6,5.4 -3.6,5.4 -6.8,0Z" fill="#fff" stroke="#405b80" stroke-width="0.9" /><circle cx="0" cy="0" r="2.8" fill="#a9bfd6" stroke="#405b80" stroke-width="0.7"/><circle cx="0" cy="0" r="1.3" fill="#1f3b5e"/><path d="M7.6,5.6 V7.2 H6.0Z" fill="#2a3f5a" /></g>
<g transform="translate(885,188.2)"><path d="M-6,-3.6 L-0.4,-6.2 H6.2 V3.2 L0.6,6.2 H-6Z" fill="#fff" stroke="#405b80" stroke-width="0.8" /><path d="M0.6,-3.4 L6.2,-6.2 V3.2 L0.6,6.2Z" fill="#a9bfd6" stroke="#405b80" stroke-width="0.7" /><path d="M-6,-3.6 H0.6 V6.2 M-3.6,-4.6 L-1.6,5.8" fill="none" stroke="#405b80" stroke-width="0.7" /><path d="M7.6,5.800000000000001 V7.4 H6.0Z" fill="#2a3f5a" /></g>
<g transform="translate(885,206.6)"><rect x="-6.2" y="-6.2" width="12.4" height="9.4" fill="#fff" rx="0.6" stroke="#1f3b5e" stroke-width="0.9" /><circle cx="0" cy="-1.6" r="1.9" fill="none" stroke="#1f3b5e" stroke-width="1.2"/><circle cx="0" cy="-1.6" r="2.8" fill="none" stroke="#1f3b5e" stroke-width="1.0" stroke-dasharray="1.1 1.1"/><path d="M-2.6,6.2 L0,3.6 L2.6,6.2Z" fill="#1f3b5e" /><path d="M7.6,5.800000000000001 V7.4 H6.0Z" fill="#2a3f5a" /></g>
<g transform="translate(885,228.6)"><path d="M-3.2,-4 L1,-2 V2.6 L-3.2,5 L-7.2,2.6 V-2Z" fill="url(#rb)" stroke="#1f3b5e" stroke-width="0.6" /><rect x="2.6" y="-6" width="3.2" height="12" fill="url(#rb)" rx="1.5" stroke="#1f3b5e" stroke-width="0.6" /></g>
<g transform="translate(880.3,247.4)"><rect x="2.4" y="-6.2" width="3.2" height="12.4" fill="url(#rb)" rx="1.5" stroke="#1f3b5e" stroke-width="0.6" /><path d="M-6.6,-5.6 H0.6 V-1.2 H-1.4 L-2.6,0.8 L-3.2,-1.2 H-6.6Z" fill="#f47a1f" stroke="#c9621a" stroke-width="0.4" /><path d="M-5.2,-3.4 h0.9 M-3.4,-3.4 h0.9 M-1.6,-3.4 h0.9" fill="none" stroke="#fff" stroke-width="0.9" /></g>
<path d="M892.4000000000001,246.5 h3.6 l-1.8,2z" fill="#1a1a1a" />
<g transform="translate(885,266)"><rect x="3" y="-6.4" width="3.2" height="12.4" fill="url(#rb)" rx="1.5" stroke="#1f3b5e" stroke-width="0.6" /><path d="M-6.4,5.4 L-1.4,0.4 M-1.8,0.8 C-3,-1.6 -0.6,-3.6 1.4,-2.8 L-0.2,-1.2 L0.6,0 L2.4,-1.6 C3,0.6 0.8,2.6 -1.4,1.4" fill="none" stroke="#405b80" stroke-width="1.2" /></g>
<g transform="translate(885,288)"><path d="M-6,-6.6 H1 V-2.4 H-1.2 L-2.6,-0.2 L-3.2,-2.4 H-6Z" fill="#f47a1f" stroke="#c9621a" stroke-width="0.4" /><path d="M-4.6,-4.4 h0.9 M-2.8,-4.4 h0.9 M-1,-4.4 h0.9" fill="none" stroke="#fff" stroke-width="0.9" /><path d="M2.6,-0.6 V6 M-0.8,2.8 H6" fill="none" stroke="#405b80" stroke-width="0.8" stroke-dasharray="1.2 0.8"/><path d="M2.6,-1.2 l1.2,1.4 h-2.4z M2.6,6.6 l1.2,-1.4 h-2.4z M-1.4,2.8 l1.4,-1.2 v2.4z M6.6,2.8 l-1.4,-1.2 v2.4z" fill="#1f3b5e" /></g>
<g transform="translate(879.8,314.4)"><path d="M-2.4,0.6 V-5 C-2.4,-6.4 -0.6,-6.4 -0.6,-5 V-1.4 C0.2,-2 1.4,-1.8 1.6,-0.8 C2.6,-1.4 3.6,-1 3.8,0 C4.8,-0.4 5.6,0.2 5.6,1.4 V3.6 C5.6,5.6 4,6.4 2,6.4 H0.4 C-1.2,6.4 -2.2,5.6 -3.4,3.8 L-5.2,1.2 C-5.8,0 -4.2,-0.8 -3.4,0.2Z" fill="#fff" stroke="#405b80" stroke-width="0.8" /></g>
<path d="M892.4000000000001,313.3 h3.6 l-1.8,2z" fill="#1a1a1a" />
<g transform="translate(885,336)"><rect x="-6.2" y="-6.4" width="12.4" height="12.6" fill="#fff" rx="0.8" stroke="#405b80" stroke-width="0.9" /><rect x="-5.8" y="-6" width="11.6" height="2" fill="#f47a1f" /><path d="M-3.8,-1.6 C-1.2,-0.2 1.6,-0.6 3.8,-2.4 C4.4,0.6 3.6,3.4 0.6,4.6 C-2.4,4.8 -4.4,2 -3.8,-1.6Z" fill="#a9bfd6" stroke="#405b80" stroke-width="0.7" /></g>
<g transform="translate(885,354.6)"><path d="M-6,-2.6 C-3.4,-0.6 1.2,-2.4 4.6,-5.6 C6.6,-4.6 6.2,-0.6 5.8,3 L2,5.4 C-1.6,5.6 -6.6,2.4 -6,-2.6Z" fill="#fff" stroke="#405b80" stroke-width="0.8" /><rect x="0.6" y="2" width="5.6" height="1.7" fill="#f47a1f" stroke="#c9621a" stroke-width="0.3" /><path d="M7.6,5.800000000000001 V7.4 H6.0Z" fill="#2a3f5a" /></g>
<g transform="translate(885,375)"><path d="M-6.2,-4.2 L6.4,-5.6 V2.6 L-6.2,4.6Z" fill="#a9bfd6" stroke="#405b80" stroke-width="0.8" /><path d="M-0.6,0.6 L3.6,1.4 L2.6,3 L6.4,5.8 L1.6,5.8 L-0.4,3.6Z" fill="#f47a1f" /><path d="M7.6,5.4 V7 H6.0Z" fill="#2a3f5a" /></g>
<line x1="4.2" y1="453.5" x2="4.2" y2="467" stroke="#b4b4b4" stroke-width="1" stroke-dasharray="1 1.45"/>
<line x1="115.6" y1="453.5" x2="115.6" y2="467" stroke="#b4b4b4" stroke-width="1" stroke-dasharray="1 1.45"/>
<line x1="184.6" y1="454" x2="184.6" y2="468" stroke="#e4e4e4" stroke-width="1"/>
<g transform="translate(15.6,460.8)"><path d="M-7.4,-1.6 L-4.4,-4.8 L-0.6,-1 L-2.2,1.2 L-5.2,1.2Z" fill="#8fa7c4" stroke="#405b80" stroke-width="0.9" /><line x1="-2.6" y1="0.6" x2="-0.2" y2="3.4" stroke="#405b80" stroke-width="1.6" /><circle cx="0.3" cy="4" r="1.4" fill="#f47a1f" stroke="#8a4a20" stroke-width="0.4"/><line x1="4.8" y1="-6.8" x2="4.8" y2="7" stroke="#1f3b5e" stroke-width="1.1" /><rect x="3.0" y="-3.7" width="3.6" height="3.3" fill="#1f3b5e" rx="1" /><rect x="3.0" y="0.7" width="3.6" height="3.3" fill="#1f3b5e" rx="1" /><line x1="3.5999999999999996" y1="-2" x2="6.0" y2="-2" stroke="#8aa0bc" stroke-width="0.5" /><line x1="3.5999999999999996" y1="2.4" x2="6.0" y2="2.4" stroke="#8aa0bc" stroke-width="0.5" /></g>
<path d="M27.599999999999998,459.90000000000003 h3.6 l-1.8,2z" fill="#1a1a1a" />
<g transform="translate(44.4,460.8)"><circle cx="-3.6" cy="-4" r="2.6" fill="#9db2cc" stroke="#405b80" stroke-width="0.8"/><path d="M-2.2,-2.6 L0.6,0.4" fill="none" stroke="#7a8fa8" stroke-width="1.8" /><path d="M-1,-1.2 L5.8,2.4 L1.4,6.4Z" fill="#fff" stroke="#f26a1e" stroke-width="1.5" stroke-linejoin="round"/></g>
<path d="M56.400000000000006,459.90000000000003 h3.6 l-1.8,2z" fill="#1a1a1a" />
<g transform="translate(73,460.8)"><line x1="-3.8" y1="-6.8" x2="-3.8" y2="7" stroke="#1f3b5e" stroke-width="1.2" /><circle cx="-3.8" cy="-0.8" r="3.3" fill="#fff" stroke="#1f3b5e" stroke-width="1.0"/><path d="M-4.8,0 L-2.8,-1.6" fill="none" stroke="#f47a1f" stroke-width="0.9" /><line x1="3.8" y1="-6.8" x2="3.8" y2="7" stroke="#1f3b5e" stroke-width="1.1" /><rect x="1.9999999999999998" y="-3.7" width="3.6" height="3.3" fill="#1f3b5e" rx="1" /><rect x="1.9999999999999998" y="0.7" width="3.6" height="3.3" fill="#1f3b5e" rx="1" /><line x1="2.5999999999999996" y1="-2" x2="5.0" y2="-2" stroke="#8aa0bc" stroke-width="0.5" /><line x1="2.5999999999999996" y1="2.4" x2="5.0" y2="2.4" stroke="#8aa0bc" stroke-width="0.5" /></g>
<path d="M84.8,459.90000000000003 h3.6 l-1.8,2z" fill="#1a1a1a" />
<g transform="translate(101.3,460.8)"><rect x="-5.4" y="-1" width="10.8" height="7.4" fill="#fff" rx="0.6" stroke="#1f3b5e" stroke-width="0.9" /><path d="M-5.6,-3.6 L4.8,-6.6 L5.4,-4.4 L-5,-1.4Z" fill="#1f3b5e" /><path d="M-3.4,-4.2 L-2,-2.4 M-0.4,-5 L1,-3.2 M2.6,-5.8 L4,-4.2" fill="none" stroke="#f47a1f" stroke-width="1.2" /><line x1="-5.4" y1="1.2" x2="5.4" y2="1.2" stroke="#1f3b5e" stroke-width="0.8" /></g>
<g transform="translate(0,0)"><circle cx="124.4" cy="456.3" r="2.5" fill="#fbe3d2" stroke="#f28a4c" stroke-width="0.7"/><circle cx="124.4" cy="456.3" r="0.75" fill="#f28a4c"/><circle cx="122.6" cy="463.6" r="3.1" fill="#fbe3d2" stroke="#f28a4c" stroke-width="0.7"/><circle cx="122.6" cy="463.6" r="1.922" fill="none" stroke="#f28a4c" stroke-width="0.7"/><circle cx="122.6" cy="463.6" r="0.9299999999999999" fill="#f28a4c"/><circle cx="129.8" cy="460" r="4.5" fill="#fbe3d2" stroke="#f28a4c" stroke-width="0.7"/><circle cx="129.8" cy="460" r="2.79" fill="none" stroke="#f28a4c" stroke-width="0.7"/><circle cx="129.8" cy="460" r="1.3499999999999999" fill="#f28a4c"/></g>
<path d="M138.8,459.4 h3.4 l-1.7,1.9z" fill="#1a1a1a" />
<g transform="translate(0,0)"><circle cx="152.4" cy="463" r="4.4" fill="#fbe3d2" stroke="#f28a4c" stroke-width="0.7"/><circle cx="152.4" cy="463" r="2.728" fill="none" stroke="#f28a4c" stroke-width="0.7"/><circle cx="152.4" cy="463" r="1.32" fill="#f28a4c"/><path d="M154.6,457 L157.8,460.2 L161.6,453.8" fill="none" stroke="#1f3b5e" stroke-width="1.6" /></g>
<g transform="translate(174,460.8)"><path d="M-5.4,6.4 L-2.6,-5 L4.6,-3.8" fill="none" stroke="#405b80" stroke-width="1.9" stroke-linejoin="round"/><path d="M-5.4,6.4 L-2.6,-5 L4.6,-3.8" fill="none" stroke="#c4d1e0" stroke-width="0.5" stroke-dasharray="1 1"/><path d="M2.2,2.6 L5.4,3.0 M2.2,2.6 L0.20000000000000018,5.6 M2.2,2.6 L1.2000000000000002,-0.7999999999999998" fill="none" stroke="#f47a1f" stroke-width="1.0" /><circle cx="5.800000000000001" cy="3.0" r="0.9" fill="#f47a1f"/><circle cx="0.0" cy="5.9" r="0.9" fill="#f47a1f"/><circle cx="2.2" cy="2.6" r="0.9" fill="#f47a1f"/><path d="M-6,-2.2 L-0.2,-2.4 L6,-6.2" fill="none" stroke="#f47a1f" stroke-width="1.0" /><circle cx="5.6" cy="-6" r="1.1" fill="#f47a1f"/></g>
<g transform="translate(195.4,460.8)"><path d="M-5.4,6.4 L-2.6,-5 L4.6,-3.8" fill="none" stroke="#405b80" stroke-width="1.9" stroke-linejoin="round"/><path d="M-5.4,6.4 L-2.6,-5 L4.6,-3.8" fill="none" stroke="#c4d1e0" stroke-width="0.5" stroke-dasharray="1 1"/><path d="M2.4,2.8 L5.6,3.1999999999999997 M2.4,2.8 L0.3999999999999999,5.8 M2.4,2.8 L1.4,-0.6000000000000001" fill="none" stroke="#f47a1f" stroke-width="1.0" /><circle cx="6.0" cy="3.1999999999999997" r="0.9" fill="#f47a1f"/><circle cx="0.19999999999999973" cy="6.1" r="0.9" fill="#f47a1f"/><circle cx="2.4" cy="2.8" r="0.9" fill="#f47a1f"/></g>
<g transform="translate(5.4,6.4) scale(1.1470588235294117)"><circle cx="0" cy="0" r="3.6" fill="#e9e4df"/><circle cx="0" cy="0" r="3.2" fill="#f47a1f"/><path d="M-0.9,-2.6 C-0.9,-1.2 -0.3,-0.6 -0.3,0 C-0.3,0.8 -1,1.6 -1,2.9 H1 C1,1.6 0.3,0.8 0.3,0 C0.3,-0.6 0.9,-1.2 0.9,-2.6Z" fill="#fff" /></g>
<line x1="829.2" y1="6.4" x2="834.2" y2="6.4" stroke="#222" stroke-width="0.8" />
<rect x="856.2" y="4.9" width="4" height="4" fill="none" stroke="#333" stroke-width="0.6" /><path d="M857.4,4.9 V3.9 H861.2 V7.8 H860.2" fill="none" stroke="#333" stroke-width="0.6" />
<path d="M883.6,4 L888.4,8.8 M888.4,4 L883.6,8.8" fill="none" stroke="#222" stroke-width="0.8" />
<circle cx="893.1" cy="20.4" r="2.3" fill="none" stroke="#4a5f80" stroke-width="0.75"/><line x1="891.5" y1="22.2" x2="889.2" y2="24.8" stroke="#4a5f80" stroke-width="1.0" />
<g font-family="Liberation Sans, sans-serif" font-weight="700" font-size="12.4" fill="#1f3b5e" text-anchor="middle"><text transform="translate(804.2,44.4) scale(0.64,1)">G</text><text transform="translate(822.8,44.4) scale(0.64,1)">R</text></g>
<rect x="218.70000000000002" y="54.6" width="3.4" height="3.6" fill="#111" rx="0.5" /><rect x="219.4" y="53.6" width="2" height="1.4" fill="none" rx="0.4" stroke="#111" stroke-width="0.6" />
<path d="M228.9,55 h4.6 l-2.3,2.7z" fill="#111" />
<path d="M240.4,53.6 L244.8,58 M244.8,53.6 L240.4,58" fill="none" stroke="#111" stroke-width="1.3" />
<rect x="850.5" y="54.6" width="3.4" height="3.6" fill="#111" rx="0.5" /><rect x="851.2" y="53.6" width="2" height="1.4" fill="none" rx="0.4" stroke="#111" stroke-width="0.6" />
<path d="M860.9,55 h4.6 l-2.3,2.7z" fill="#111" />
<path d="M221.6,68.4 h4.6 l-2.3,2.6z" fill="#111" />
<g transform="translate(236.6,70)"><path d="M-0.6,-3.6 L1.6,-5.2 L4,-3.8 V-1.4 L1.8,-0.2 L-0.6,-1.4Z" fill="#d4dce8" stroke="#6f86a4" stroke-width="0.6" /><path d="M2,-0.6 L4.2,-2 L6.2,-0.6 V1.6 L4.2,3 L2,1.8Z" fill="#c4cfde" stroke="#6f86a4" stroke-width="0.6" /><circle cx="-2.2" cy="0.9" r="3.4" fill="#1787dc"/><circle cx="-2.8" cy="0.2" r="2.2" fill="#2a9bec"/><line x1="-2.2" y1="-1.4" x2="-2.2" y2="3" stroke="#fff" stroke-width="0.9" /></g>
<path d="M25.4,86 V218 M33.8,99 V104.5 M33.8,120 V125 M33.8,141 V146 M42.2,151 V166.5 M33.8,182 V187 M33.8,202 V208 M33.8,223 V311 M42.2,234 V300 M42.2,316 V321" stroke="#e4e4e4" stroke-width="0.6" fill="none"/>
<g transform="translate(24.5,81.8) scale(1.0294117647058825)"><circle cx="0" cy="0" r="3.6" fill="#e9e4df"/><circle cx="0" cy="0" r="3.2" fill="#f47a1f"/><path d="M-0.9,-2.6 C-0.9,-1.2 -0.3,-0.6 -0.3,0 C-0.3,0.8 -1,1.6 -1,2.9 H1 C1,1.6 0.3,0.8 0.3,0 C0.3,-0.6 0.9,-1.2 0.9,-2.6Z" fill="#fff" /></g>
<rect x="23.099999999999998" y="91.22999999999999" width="4.6" height="4.6" fill="#fff" rx="0.6" stroke="#c4c4c4" stroke-width="0.7" /><line x1="24.2" y1="93.52999999999999" x2="26.599999999999998" y2="93.52999999999999" stroke="#5c6ab0" stroke-width="0.8" />
<g transform="translate(32.8,92.42999999999999)"><path d="M0,-3.6 L0.7,-0.7 L3.6,0 L0.7,0.7 L0,3.6 L-0.7,0.7 L-3.6,0 L-0.7,-0.7Z" fill="#4a6485" /><path d="M-2.2,-2.2 L2.2,2.2" fill="none" stroke="#4a6485" stroke-width="0.7" /><path d="M-3.2,3.4 L-0.6,-0.4 L3.4,-3.6 L0.6,0.4Z" fill="#f47a1f" /></g>
<rect x="31.499999999999996" y="101.55999999999999" width="4.6" height="4.6" fill="#fff" rx="0.6" stroke="#c4c4c4" stroke-width="0.7" /><line x1="32.599999999999994" y1="103.85999999999999" x2="35.0" y2="103.85999999999999" stroke="#5c6ab0" stroke-width="0.8" /><line x1="33.8" y1="102.65999999999998" x2="33.8" y2="105.05999999999999" stroke="#5c6ab0" stroke-width="0.8" />
<g transform="translate(41.3,102.75999999999999)"><path d="M-3.2,-0.6 L-0.6,-3.2 L3.4,-2.4 L2.6,1.2 L-0.4,3.4 L-1.4,1.2Z" fill="#8fa9c5" stroke="#4a6485" stroke-width="0.5" /><circle cx="0.4" cy="-0.8" r="1.2" fill="#dfe6ef" stroke="#4a6485" stroke-width="0.4"/></g>
<rect x="23.099999999999998" y="111.89" width="4.6" height="4.6" fill="#fff" rx="0.6" stroke="#c4c4c4" stroke-width="0.7" /><line x1="24.2" y1="114.19" x2="26.599999999999998" y2="114.19" stroke="#5c6ab0" stroke-width="0.8" />
<g transform="translate(32.8,113.09)"><path d="M-2.2,-3.2 V3.4 M0.2,-3.2 V3.4 M2.6,-3.2 V3.4" fill="none" stroke="#4a6485" stroke-width="0.9" stroke-dasharray="1.1 0.9"/></g>
<rect x="31.499999999999996" y="122.21999999999998" width="4.6" height="4.6" fill="#fff" rx="0.6" stroke="#c4c4c4" stroke-width="0.7" /><line x1="32.599999999999994" y1="124.51999999999998" x2="35.0" y2="124.51999999999998" stroke="#5c6ab0" stroke-width="0.8" /><line x1="33.8" y1="123.31999999999998" x2="33.8" y2="125.71999999999998" stroke="#5c6ab0" stroke-width="0.8" />
<g transform="translate(41.3,123.41999999999999)"><path d="M-1,-3 H1.6 L3.4,-1.2 V3.6 H-1Z" fill="#8fa9c5" stroke="#4a6485" stroke-width="0.5" /><path d="M-3.6,-2.6 L-0.4,-0.6 M-3.6,0.6 H-0.8" fill="none" stroke="#f47a1f" stroke-width="0.9" /><rect x="0.2" y="0" width="1.8" height="2.6" fill="#fff" /></g>
<rect x="23.099999999999998" y="132.54999999999998" width="4.6" height="4.6" fill="#fff" rx="0.6" stroke="#c4c4c4" stroke-width="0.7" /><line x1="24.2" y1="134.85" x2="26.599999999999998" y2="134.85" stroke="#5c6ab0" stroke-width="0.8" />
<g transform="translate(32.8,133.75)"><path d="M0,-3.4 L3.2,-1.8 L3.2,1 L0,3.6 L-3.2,1 L-3.2,-1.8Z" fill="#5d7798" /><path d="M-2.2,-1.6 L0,-2.6 L2.2,-1.6 L1,-0.2 H-1Z" fill="#f47a1f" /><path d="M-2.6,-0.6 L-1.2,0.4 L-0.4,2.4 L-2.4,1Z" fill="#f47a1f" /><path d="M2.6,-0.6 L1.2,0.4 L0.4,2.4 L2.4,1Z" fill="#f47a1f" /><circle cx="0" cy="0.4" r="0.6" fill="#fff"/></g>
<rect x="31.499999999999996" y="142.87999999999997" width="4.6" height="4.6" fill="#fff" rx="0.6" stroke="#c4c4c4" stroke-width="0.7" /><line x1="32.599999999999994" y1="145.17999999999998" x2="35.0" y2="145.17999999999998" stroke="#5c6ab0" stroke-width="0.8" />
<g transform="translate(41.3,144.07999999999998)"><path d="M0,-4 L1.8,-2 L0,-0.4 L-1.8,-2Z" fill="#4a6485" /><path d="M-3.8,3.4 L-2.6,0.6 L-1.4,3.4Z M-1.2,3.4 L0,0.6 L1.2,3.4Z M1.4,3.4 L2.6,0.6 L3.8,3.4Z" fill="#f47a1f" /><path d="M-2.6,0.4 L0,-0.6 L2.6,0.4" fill="none" stroke="#b9c4d2" stroke-width="0.4" /></g>
<g transform="translate(49.7,154.41)"><path d="M0,-3.4 L3.2,-1.8 L3.2,1 L0,3.6 L-3.2,1 L-3.2,-1.8Z" fill="#5d7798" /><path d="M-2.2,-1.6 L0,-2.6 L2.2,-1.6 L1,-0.2 H-1Z" fill="#f47a1f" /><path d="M-2.6,-0.6 L-1.2,0.4 L-0.4,2.4 L-2.4,1Z" fill="#f47a1f" /><path d="M2.6,-0.6 L1.2,0.4 L0.4,2.4 L2.4,1Z" fill="#f47a1f" /><circle cx="0" cy="0.4" r="0.6" fill="#fff"/></g>
<g transform="translate(49.7,164.74)"><path d="M-3,-3.2 V3.4" fill="none" stroke="#f47a1f" stroke-width="0.8" /><path d="M-3,-4 l0.9,1.3 h-1.8z M-3,4.2 l0.9,-1.3 h-1.8z" fill="#f47a1f" /><path d="M-0.8,-1 L1.4,-3 H3.2 V3.4 H1.4 L-0.8,1.4Z" fill="#c4d1e0" stroke="#4a6485" stroke-width="0.5" /><line x1="1.8" y1="-2.4" x2="1.8" y2="2.8" stroke="#4a6485" stroke-width="0.5" /></g>
<rect x="23.099999999999998" y="173.86999999999998" width="4.6" height="4.6" fill="#fff" rx="0.6" stroke="#c4c4c4" stroke-width="0.7" /><line x1="24.2" y1="176.17" x2="26.599999999999998" y2="176.17" stroke="#5c6ab0" stroke-width="0.8" />
<g transform="translate(32.8,175.07)"><path d="M0,-3.4 L3.2,-1.8 V1.6 L0,3.4 L-3.2,1.6 V-1.8Z" fill="url(#rb)" stroke="#4a6485" stroke-width="0.4" /></g>
<g transform="translate(41.3,185.39999999999998)"><path d="M-3.4,-1 C-2.4,-3.6 0.6,-4 1.6,-2 L0.4,2.4 L-2,1.8Z" fill="url(#rb)" stroke="#4a6485" stroke-width="0.3" /><rect x="1.6" y="-1" width="2" height="4.6" fill="#c4d1e0" rx="0.6" stroke="#4a6485" stroke-width="0.4" /></g>
<rect x="23.099999999999998" y="194.52999999999997" width="4.6" height="4.6" fill="#fff" rx="0.6" stroke="#c4c4c4" stroke-width="0.7" /><line x1="24.2" y1="196.82999999999998" x2="26.599999999999998" y2="196.82999999999998" stroke="#5c6ab0" stroke-width="0.8" />
<g transform="translate(32.8,195.73)"><path d="M0,0 V-3 M0,0 L3.2,0.6 M0,0 L-2.6,2.8" fill="none" stroke="#f47a1f" stroke-width="0.9" /><path d="M0,-3.8 l0.9,1.4 h-1.8z" fill="#f47a1f" /></g>
<g transform="translate(41.3,206.06)"><rect x="-0.6" y="-2.2" width="3.2" height="3" fill="#8fa9c5" /><g transform="translate(-0.6,0.6) scale(0.9)"><path d="M0,0 V-3 M0,0 L3.2,0.6 M0,0 L-2.6,2.8" fill="none" stroke="#f47a1f" stroke-width="0.9" /><path d="M0,-3.8 l0.9,1.4 h-1.8z" fill="#f47a1f" /></g></g>
<rect x="23.099999999999998" y="215.18999999999997" width="4.6" height="4.6" fill="#fff" rx="0.6" stroke="#c4c4c4" stroke-width="0.7" /><line x1="24.2" y1="217.48999999999998" x2="26.599999999999998" y2="217.48999999999998" stroke="#5c6ab0" stroke-width="0.8" />
<g transform="translate(32.8,216.39)"><rect x="-3.2" y="-3.4" width="6.4" height="6.8" fill="#e6ebf1" rx="0.4" stroke="#8a98ab" stroke-width="0.6" /><rect x="-2" y="-2" width="2.2" height="2.2" fill="#4a6485" /><path d="M1,-1.6 h1.4 M-2,1.2 h4.4 M-2,2.4 h4.4" fill="none" stroke="#4a6485" stroke-width="0.5" /><path d="M1.4,-3.4 L3.2,-1.6 V-3.4Z" fill="#f47a1f" /></g>
<rect x="31.499999999999996" y="225.51999999999998" width="4.6" height="4.6" fill="#fff" rx="0.6" stroke="#c4c4c4" stroke-width="0.7" /><line x1="32.599999999999994" y1="227.82" x2="35.0" y2="227.82" stroke="#5c6ab0" stroke-width="0.8" />
<g transform="translate(41.3,226.72)"><rect x="-3.6" y="-3.4" width="3.4" height="2.6" fill="#1f3b5e" /><rect x="0.4" y="-3.4" width="3.2" height="2.6" fill="#5d7798" /><rect x="-1.6" y="0" width="5.2" height="3.4" fill="#1f3b5e" /><rect x="0.2" y="1" width="1.6" height="1.4" fill="#c4d1e0" /><path d="M-3.4,0.4 v2.4" fill="none" stroke="#4a6485" stroke-width="0.6" /></g>
<g transform="translate(49.7,237.04999999999998)"><rect x="-3" y="-3.2" width="6" height="6.2" fill="#fff" rx="0.5" stroke="#8a98ab" stroke-width="0.6" /><rect x="-2.8" y="-3.2" width="5.6" height="1.3" fill="#f47a1f" /><path d="M1.2,3 L3,1.2" fill="none" stroke="#8a98ab" stroke-width="0.5" /></g>
<g transform="translate(49.7,247.57999999999998)"><path d="M-3.2,-1.8 h1.4 l0.6,-1 h2.4 l0.6,1 h1.4 v4.6 h-6.4z" fill="#8fa5c0" stroke="#506a8c" stroke-width="0.6" /><circle cx="0" cy="0.5" r="1.5" fill="#dfe6ef"/><circle cx="0" cy="0.5" r="0.8" fill="#1f3b5e"/></g>
<g transform="translate(49.7,257.91)"><path d="M-3.2,-1.8 h1.4 l0.6,-1 h2.4 l0.6,1 h1.4 v4.6 h-6.4z" fill="#8fa5c0" stroke="#506a8c" stroke-width="0.6" /><circle cx="0" cy="0.5" r="1.5" fill="#dfe6ef"/><circle cx="0" cy="0.5" r="0.8" fill="#1f3b5e"/></g>
<g transform="translate(49.7,268.23999999999995)"><path d="M-3.2,-1.8 h1.4 l0.6,-1 h2.4 l0.6,1 h1.4 v4.6 h-6.4z" fill="#8fa5c0" stroke="#506a8c" stroke-width="0.6" /><circle cx="0" cy="0.5" r="1.5" fill="#dfe6ef"/><circle cx="0" cy="0.5" r="0.8" fill="#1f3b5e"/></g>
<g transform="translate(49.7,278.57)"><path d="M-3.2,-1.8 h1.4 l0.6,-1 h2.4 l0.6,1 h1.4 v4.6 h-6.4z" fill="#8fa5c0" stroke="#506a8c" stroke-width="0.6" /><circle cx="0" cy="0.5" r="1.5" fill="#dfe6ef"/><circle cx="0" cy="0.5" r="0.8" fill="#1f3b5e"/></g>
<g transform="translate(49.7,288.9)"><rect x="-3.3" y="-3.2" width="6.6" height="6.4" fill="#dfe6ef" stroke="#4a6485" stroke-width="0.5" /><rect x="-3.3" y="-3.2" width="6.6" height="1.6" fill="#1f3b5e" /><path d="M-3.3,0 h6.6 M-3.3,1.6 h6.6" fill="none" stroke="#1f3b5e" stroke-width="0.7" /></g>
<g transform="translate(49.7,299.03)"><path d="M-2.8,-3.4 H1 L2.8,-1.6 V3.4 H-2.8Z" fill="#fff" stroke="#8a98ab" stroke-width="0.6" /><rect x="-2.4" y="1.6" width="4.8" height="1.3" fill="#f47a1f" /></g>
<rect x="31.499999999999996" y="308.16" width="4.6" height="4.6" fill="#fff" rx="0.6" stroke="#c4c4c4" stroke-width="0.7" /><line x1="32.599999999999994" y1="310.46000000000004" x2="35.0" y2="310.46000000000004" stroke="#5c6ab0" stroke-width="0.8" />
<g transform="translate(41.3,309.36)"><rect x="-3.2" y="-3.4" width="6.4" height="6.8" fill="#e6ebf1" rx="0.4" stroke="#8a98ab" stroke-width="0.6" /><rect x="-2" y="-2" width="2.2" height="2.2" fill="#4a6485" /><path d="M1,-1.6 h1.4 M-2,1.2 h4.4 M-2,2.4 h4.4" fill="none" stroke="#4a6485" stroke-width="0.5" /><path d="M1.4,-3.4 L3.2,-1.6 V-3.4Z" fill="#f47a1f" /></g>
<g transform="translate(49.7,319.69)"><rect x="-2.8" y="-3.2" width="5.6" height="6.6" fill="#dfe6ef" stroke="#8a98ab" stroke-width="0.6" /><rect x="-1.8" y="-2" width="1.8" height="1.8" fill="#4a6485" /><path d="M-1.8,1 h3.6 M-1.8,2.2 h3.6 M0.8,-1.4 h1.2" fill="none" stroke="#4a6485" stroke-width="0.5" /></g>
<path d="M26.6,432.2 L24.2,434.6 L26.6,437" fill="none" stroke="#333" stroke-width="1.25" />
<path d="M241.6,432.2 L244,434.6 L241.6,437" fill="none" stroke="#333" stroke-width="1.25" />
<rect x="3.2" y="444.4" width="1.6" height="2.6" fill="#222" rx="0.3" />
<path d="M16,444.2 L18.8,445.8 L16,447.4Z" fill="#333" />
<path d="M792.4000000000001,476.5 h3.6 l-1.8,2z" fill="#222" />
<path d="M819.0,476.5 h3.6 l-1.8,2z" fill="#222" />
<path d="M847.2,476.5 h3.6 l-1.8,2z" fill="#222" />
<path d="M875.2,476.5 h3.6 l-1.8,2z" fill="#222" />
<line x1="798.6" y1="473" x2="798.6" y2="483" stroke="#d8d8d8" stroke-width="1"/>
<line x1="880.6" y1="473" x2="880.6" y2="483" stroke="#d8d8d8" stroke-width="1"/>
<line x1="761.5" y1="473" x2="761.5" y2="483" stroke="#d8d8d8" stroke-width="1"/>
<circle cx="832.6" cy="474.8" r="1.0" fill="#1f3b5e"/><circle cx="832.6" cy="480.6" r="1.0" fill="#1f3b5e"/><circle cx="834.6" cy="477.7" r="0.9" fill="#1f3b5e"/><circle cx="837.4" cy="477.7" r="0.9" fill="#1f3b5e"/>
<circle cx="862.7" cy="477.5" r="3.1" fill="none" stroke="#1f3b5e" stroke-width="1.1"/><path d="M864.6,474.2 l1.6,-0.4 l-0.2,1.8z" fill="#f0f0f0" />
<path d="M891.4,473.6 C893.2,473.6 893.6,475.6 893.6,477.4 L894.4,479.4 H888.4 L889.2,477.4 C889.2,475.6 889.6,473.6 891.4,473.6Z" fill="#1f3b5e" /><circle cx="891.4" cy="480.4" r="0.9" fill="#1f3b5e"/>
<rect x="0" y="481.8" width="900" height="1.2" fill="#e2e2e2" /><rect x="0" y="481.8" width="27.6" height="1.2" fill="#c6c6c6" />
<line x1="249.8" y1="50" x2="249.8" y2="440" stroke="#e9e9e9" stroke-width="1"/>
<line x1="869.4" y1="50" x2="869.4" y2="440.5" stroke="#e0e0e0" stroke-width="1"/>
<defs><linearGradient id="gL" gradientUnits="userSpaceOnUse" x1="293" y1="350" x2="300.8" y2="372.3"><stop offset="0" stop-color="#1c64d4"/><stop offset="0.08" stop-color="#1a78c8"/><stop offset="0.15" stop-color="#1694b0"/><stop offset="0.21" stop-color="#30c830"/><stop offset="0.3" stop-color="#c8e010"/><stop offset="0.36" stop-color="#f4e404"/><stop offset="0.43" stop-color="#70cc24"/><stop offset="0.49" stop-color="#1a80a0"/><stop offset="0.54" stop-color="#1a9470"/><stop offset="0.6" stop-color="#2cbc24"/><stop offset="0.76" stop-color="#4cc01c"/><stop offset="0.88" stop-color="#8cb80c"/><stop offset="1" stop-color="#a8ac04"/></linearGradient><linearGradient id="gT" gradientUnits="userSpaceOnUse" x1="293" y1="350" x2="300.8" y2="372.3"><stop offset="0" stop-color="#2cd818"/><stop offset="0.3" stop-color="#22d014"/><stop offset="0.44" stop-color="#1ec81a"/><stop offset="0.465" stop-color="#14807a"/><stop offset="0.5" stop-color="#14807a"/><stop offset="0.53" stop-color="#16a81a"/><stop offset="0.68" stop-color="#16a81a"/><stop offset="0.7" stop-color="#1a8c70"/><stop offset="0.73" stop-color="#1a8c70"/><stop offset="0.75" stop-color="#16a018"/><stop offset="0.9" stop-color="#1a9c14"/><stop offset="1" stop-color="#2a9810"/></linearGradient><linearGradient id="gM" gradientUnits="userSpaceOnUse" x1="293" y1="350" x2="300.8" y2="372.3"><stop offset="0" stop-color="#70d810"/><stop offset="0.1" stop-color="#4ccc18"/><stop offset="0.2" stop-color="#30c028"/><stop offset="0.25" stop-color="#1a8cbc"/><stop offset="0.46" stop-color="#1a86b8"/><stop offset="0.5" stop-color="#187c90"/><stop offset="0.53" stop-color="#18a020"/><stop offset="0.68" stop-color="#18a020"/><stop offset="0.7" stop-color="#1a8c70"/><stop offset="0.74" stop-color="#1a9840"/><stop offset="0.8" stop-color="#1a8c60"/><stop offset="0.86" stop-color="#187c8c"/><stop offset="1" stop-color="#187890"/></linearGradient><linearGradient id="gR" gradientUnits="userSpaceOnUse" x1="293" y1="350" x2="300.8" y2="372.3"><stop offset="0" stop-color="#dcdc04"/><stop offset="0.15" stop-color="#c0dc0c"/><stop offset="0.26" stop-color="#60cc20"/><stop offset="0.33" stop-color="#1a90b8"/><stop offset="0.48" stop-color="#1a88b8"/><stop offset="0.54" stop-color="#a8c808"/><stop offset="0.68" stop-color="#98c40c"/><stop offset="0.8" stop-color="#48b020"/><stop offset="0.92" stop-color="#2c9c48"/><stop offset="1" stop-color="#1a8078"/></linearGradient><linearGradient id="mLg" gradientUnits="userSpaceOnUse" x1="515" y1="0" x2="435" y2="0"><stop offset="0" stop-color="#000"/><stop offset="1" stop-color="#fff"/></linearGradient><mask id="mL" maskUnits="userSpaceOnUse" x="250" y="150" width="620" height="250"><rect x="250" y="150" width="620" height="250" fill="url(#mLg)"/></mask><linearGradient id="mMg" gradientUnits="userSpaceOnUse" x1="522" y1="0" x2="556" y2="0"><stop offset="0" stop-color="#000"/><stop offset="1" stop-color="#fff"/></linearGradient><mask id="mM" maskUnits="userSpaceOnUse" x="250" y="150" width="620" height="250"><rect x="250" y="150" width="620" height="250" fill="url(#mMg)"/></mask><linearGradient id="mRg" gradientUnits="userSpaceOnUse" x1="640" y1="0" x2="700" y2="0"><stop offset="0" stop-color="#000"/><stop offset="1" stop-color="#fff"/></linearGradient><mask id="mR" maskUnits="userSpaceOnUse" x="250" y="150" width="620" height="250"><rect x="250" y="150" width="620" height="250" fill="url(#mRg)"/></mask><linearGradient id="gGray" x1="0" y1="0" x2="1" y2="1"><stop offset="0" stop-color="#b4b4b4"/><stop offset="1" stop-color="#808080"/></linearGradient><linearGradient id="gEnd" x1="0" y1="0" x2="0" y2="1"><stop offset="0" stop-color="#d8dc10"/><stop offset="0.5" stop-color="#8ccc1c"/><stop offset="1" stop-color="#2ca84c"/></linearGradient></defs>
<path d="M292.8,350 L722,199.3 L742.7,205 L741.4,215.6 L677.5,238.7 L570,276.4 L482,308 L430,326.2 L416,333 L392,341.3 L367.5,349.4 L342.2,357.3 L316.8,365.6 C315,366 313.8,364.8 313.2,363 L311.6,357.4 L296,353Z" fill="url(#gT)"/>
<path d="M292.8,350 L722,199.3 L742.7,205 L741.4,215.6 L677.5,238.7 L570,276.4 L482,308 L430,326.2 L416,333 L392,341.3 L367.5,349.4 L342.2,357.3 L316.8,365.6 C315,366 313.8,364.8 313.2,363 L311.6,357.4 L296,353Z" fill="url(#gL)" mask="url(#mL)"/>
<path d="M292.8,350 L722,199.3 L742.7,205 L741.4,215.6 L677.5,238.7 L570,276.4 L482,308 L430,326.2 L416,333 L392,341.3 L367.5,349.4 L342.2,357.3 L316.8,365.6 C315,366 313.8,364.8 313.2,363 L311.6,357.4 L296,353Z" fill="url(#gM)" mask="url(#mM)"/>
<path d="M292.8,350 L722,199.3 L742.7,205 L741.4,215.6 L677.5,238.7 L570,276.4 L482,308 L430,326.2 L416,333 L392,341.3 L367.5,349.4 L342.2,357.3 L316.8,365.6 C315,366 313.8,364.8 313.2,363 L311.6,357.4 L296,353Z" fill="url(#gR)" mask="url(#mR)"/>
<path d="M722,199.3 L742.7,205 L738,206.6 L716,201.4Z" fill="#58cc20" opacity="0.75"/>
<path d="M731,201.9 L741.6,204.8 L739,205.6 L727,203.2Z" fill="#1a88b0" opacity="0.85"/>
<path d="M742.7,205 L741.4,215.6 L736,217.5 L737,207Z" fill="#9cc80c" opacity="0.8"/>
<path d="M293,350 L294.8,351.4 L297.4,360.4 L296,361 C294.6,360.2 293.8,358.6 293.4,356.8Z" fill="#2d8a4a"/>
<path d="M293,350 L294.6,350.6 L295.4,355 L293.4,356.4Z" fill="#1a5fc0"/>
<path d="M294.8,351.6 L312,356.6 L313,360 L311,358.4 L298.8,361.6 L297.2,360.6Z" fill="url(#gGray)"/>
<path d="M330,358.6 L741,211.4" stroke="#147a70" stroke-width="0.5" opacity="0.45" fill="none"/>
<circle cx="275.9" cy="406.3" r="3.1" fill="#0a9a14"/><circle cx="275.2" cy="405.4" r="1.4" fill="#1ec02a"/>
<path d="M276.6,407.4 L281.2,410.4" stroke="#0fb41c" stroke-width="2"/>
<path d="M281.2,410.6 L270.6,413.2" stroke="#e0100c" stroke-width="2.2"/><path d="M265.4,414.8 L271.2,410.8 L272.2,416.2Z" fill="#e4120e"/><path d="M266.4,415 L272,414.6 L272.2,416.2Z" fill="#8a0a08"/>
<path d="M281.4,410.4 L282,420.4" stroke="#1616c8" stroke-width="2.2"/><path d="M282.6,426.2 L278.8,420.2 L285.4,420.2Z" fill="#1414b8"/><path d="M282.6,426.2 L282,420.2 L285.4,420.2Z" fill="#0a0a70"/>
<g font-family="Liberation Sans, sans-serif" font-weight="700" font-size="7.9" text-anchor="middle"><text x="269.4" y="401.6" fill="#22dd22">Y</text><text x="261.2" y="417.7" fill="#f02020">X</text><text x="286.4" y="428.9" fill="#2020f0">Z</text></g></svg>
<div id="ttl" style="left:0;top:0;width:900px;height:13px;"><span style="left:10.80px;top:2.20px;font-size:7.4px;transform:scaleX(0.9284);color:#2a2a2a;-webkit-text-stroke:0;">3D-Druckstück</span> <span style="left:57.60px;top:2.20px;font-size:7.4px;transform:scaleX(0.9825);color:#2a2a2a;-webkit-text-stroke:0;">5-6</span> <span style="left:69.90px;top:2.20px;font-size:7.4px;transform:scaleX(0.9593);color:#2a2a2a;-webkit-text-stroke:0;">A350-1000</span> <span style="left:106.40px;top:2.20px;font-size:7.4px;transform:scaleX(0.8251);color:#2a2a2a;-webkit-text-stroke:0;">LC</span> <span style="left:116.00px;top:2.20px;font-size:7.4px;transform:scaleX(0.8569);color:#2a2a2a;-webkit-text-stroke:0;">LH</span> <span style="left:125.90px;top:2.20px;font-size:7.4px;transform:scaleX(0.9369);color:#2a2a2a;-webkit-text-stroke:0;">6mm</span> <span style="left:143.10px;top:2.20px;font-size:7.4px;transform:scaleX(0.7885);color:#2a2a2a;-webkit-text-stroke:0;">PEI</span> <span style="left:154.30px;top:2.20px;font-size:7.4px;transform:scaleX(0.9439);color:#2a2a2a;-webkit-text-stroke:0;">Vergleich</span> <span style="left:184.80px;top:2.20px;font-size:7.4px;transform:scaleX(0.9289);color:#2a2a2a;-webkit-text-stroke:0;">CAD</span> <span style="left:201.10px;top:2.20px;font-size:7.4px;transform:scaleX(0.9917);color:#2a2a2a;-webkit-text-stroke:0;">Modell</span> <span style="left:224.50px;top:2.20px;font-size:7.4px;transform:scaleX(1.0447);color:#2a2a2a;-webkit-text-stroke:0;">mit</span> <span style="left:236.60px;top:2.20px;font-size:7.4px;transform:scaleX(0.9504);color:#2a2a2a;-webkit-text-stroke:0;">Beschichtet+Getempert</span> <span style="left:312.00px;top:2.20px;font-size:7.4px;transform:scaleX(0.9441);color:#2a2a2a;-webkit-text-stroke:0;">(Workspace</span> <span style="left:350.90px;top:2.20px;font-size:7.4px;transform:scaleX(0.9228);color:#2a2a2a;-webkit-text-stroke:0;">1.pwk)</span> <span style="left:372.80px;top:2.20px;font-size:7.4px;transform:scaleX(1.1342);color:#2a2a2a;-webkit-text-stroke:0;">-</span> <span style="left:377.40px;top:2.20px;font-size:7.4px;transform:scaleX(0.9390);color:#2a2a2a;-webkit-text-stroke:0;">PolyWorks|Inspector</span> <span style="left:442.60px;top:2.20px;font-size:7.4px;transform:scaleX(0.9297);color:#2a2a2a;-webkit-text-stroke:0;">Premium</span></div>
<span style="left:11.20px;top:16.70px;font-size:7.4px;transform:scaleX(0.9209);color:#1a1a1a;">Datei</span>
<span style="left:38.00px;top:16.70px;font-size:7.4px;transform:scaleX(0.9231);color:#1a1a1a;">Bearbeiten</span>
<span style="left:81.50px;top:16.70px;font-size:7.4px;transform:scaleX(0.9128);color:#1a1a1a;">Auswahl</span>
<span style="left:118.00px;top:16.70px;font-size:7.4px;transform:scaleX(0.9361);color:#1a1a1a;">Ansicht</span>
<span style="left:151.30px;top:16.70px;font-size:7.4px;transform:scaleX(0.9421);color:#1a1a1a;">Ausrichten</span>
<span style="left:194.60px;top:16.70px;font-size:7.4px;transform:scaleX(0.9154);color:#1a1a1a;">Messen</span>
<span style="left:229.20px;top:16.70px;font-size:7.4px;transform:scaleX(0.9285);color:#1a1a1a;">Report</span>
<span style="left:261.00px;top:16.70px;font-size:7.4px;transform:scaleX(0.8495);color:#1a1a1a;">Extras</span>
<span style="left:289.60px;top:16.70px;font-size:7.4px;transform:scaleX(0.8858);color:#1a1a1a;">Fenster</span>
<span style="left:323.00px;top:16.70px;font-size:7.4px;transform:scaleX(0.9259);color:#1a1a1a;">Hilfe</span>
<span style="left:790.30px;top:16.80px;font-size:7.5px;transform:scaleX(0.8411);color:#7c7c7c;-webkit-text-stroke:0;">Suche</span>
<span style="left:23.60px;top:52.20px;font-size:7.4px;transform:scaleX(0.9033);color:#1a1a1a;">Baumansicht</span>
<span style="left:253.00px;top:52.20px;font-size:7.4px;transform:scaleX(0.9293);color:#1a1a1a;">3D-Ansicht</span>
<span style="left:25.80px;top:65.00px;font-size:7.4px;transform:scaleX(0.8572);color:#1a1a1a;">Teil 1</span>
<span style="left:32.10px;top:79.85px;font-size:7.4px;transform:scaleX(0.9260);color:#161616;max-width:233.5px;overflow:hidden;">3D-Druckstück 5-6 A350-1000 LC LH 6mm PEI Vergleich CAD Modell mit Beschichtet+Getempert</span>
<span style="left:40.30px;top:89.68px;font-size:7.4px;transform:scaleX(0.9000);color:#161616;">Referenz</span>
<span style="left:48.50px;top:100.01px;font-size:7.4px;transform:scaleX(0.8919);color:#161616;max-width:224.0px;overflow:hidden;">INTENSIFIER STR. 5-6 IB ----- 3DP Airtech Dahltram I350-CF + _ TMO</span>
<span style="left:40.30px;top:110.34px;font-size:7.4px;transform:scaleX(0.9222);color:#161616;">Daten</span>
<span style="left:48.50px;top:120.67px;font-size:7.4px;transform:scaleX(0.9452);color:#161616;max-width:211.4px;overflow:hidden;">3D-Druckstück (3) 5-6 PEI A350-1000 6mm beschichtet getempert</span>
<span style="left:40.30px;top:131.00px;font-size:7.4px;transform:scaleX(0.9524);color:#161616;">Ausrichtungen</span>
<span style="left:48.50px;top:141.33px;font-size:7.4px;transform:scaleX(0.9419);color:#161616;">Ausrichtegruppe 1</span>
<span style="left:56.80px;top:151.66px;font-size:7.4px;transform:scaleX(0.9502);color:#161616;">Original</span>
<span style="left:56.80px;top:161.99px;font-size:7.4px;transform:scaleX(0.9215);color:#161616;font-weight:700;">Best-Fit Referenz 1</span>
<span style="left:40.30px;top:172.32px;font-size:7.4px;transform:scaleX(0.9115);color:#161616;">Farbansichten</span>
<span style="left:48.50px;top:182.65px;font-size:7.4px;transform:scaleX(0.9130);color:#161616;font-weight:700;">Abw zu Fläche 1</span>
<span style="left:40.30px;top:192.98px;font-size:7.4px;transform:scaleX(0.9380);color:#161616;">Koordinatensysteme</span>
<span style="left:48.50px;top:203.31px;font-size:7.4px;transform:scaleX(1.0020);color:#161616;font-weight:700;">Welt</span>
<span style="left:40.30px;top:213.64px;font-size:7.4px;transform:scaleX(0.9330);color:#161616;">Report</span>
<span style="left:48.50px;top:223.97px;font-size:7.4px;transform:scaleX(0.9671);color:#161616;">Reportobjekte</span>
<span style="left:56.80px;top:234.30px;font-size:7.4px;transform:scaleX(0.9274);color:#161616;">Kopfzeile</span>
<span style="left:56.80px;top:244.63px;font-size:7.4px;transform:scaleX(0.9044);color:#161616;">Schnappschuss</span>
<span style="left:56.80px;top:254.96px;font-size:7.4px;transform:scaleX(0.9120);color:#161616;">Schnappschuss (2)</span>
<span style="left:56.80px;top:265.29px;font-size:7.4px;transform:scaleX(0.9120);color:#161616;">Schnappschuss (3)</span>
<span style="left:56.80px;top:275.62px;font-size:7.4px;transform:scaleX(0.9120);color:#161616;">Schnappschuss (4)</span>
<span style="left:56.80px;top:285.95px;font-size:7.4px;transform:scaleX(0.9449);color:#fff;max-width:137.1px;overflow:hidden;">Vergleichsfarbenansicht - Abw zu Fläche 1</span>
<span style="left:56.80px;top:296.28px;font-size:7.4px;transform:scaleX(0.8891);color:#161616;">Fußzeile</span>
<span style="left:48.50px;top:306.61px;font-size:7.4px;transform:scaleX(0.9358);color:#161616;">Formatierte Reports</span>
<span style="left:56.80px;top:316.94px;font-size:7.4px;transform:scaleX(0.9405);color:#161616;font-weight:700;">Report 1</span>
<span style="left:24.50px;top:440.20px;font-size:7.4px;transform:scaleX(0.9243);color:#1a1a1a;">Baumansicht</span>
<span style="left:70.50px;top:440.20px;font-size:7.4px;transform:scaleX(0.9690);color:#1a1a1a;">Dialogansicht</span>
<span style="left:254.50px;top:440.20px;font-size:7.4px;transform:scaleX(0.9404);color:#1a1a1a;">3D-Ansicht</span>
<span style="left:295.50px;top:440.20px;font-size:7.4px;transform:scaleX(0.9358);color:#1a1a1a;">Einstellungen Prüfmerkmale</span>
<span style="left:389.50px;top:440.20px;font-size:7.4px;transform:scaleX(0.9442);color:#1a1a1a;">Report-Editor</span>
<span style="left:764.90px;top:473.20px;font-size:7.8px;transform:scaleX(0.8418);color:#1a1a1a;">Layer 1</span>
<span style="left:801.80px;top:473.20px;font-size:7.8px;transform:scaleX(0.9077);color:#1a1a1a;">mm</span>
</div></body></html>
